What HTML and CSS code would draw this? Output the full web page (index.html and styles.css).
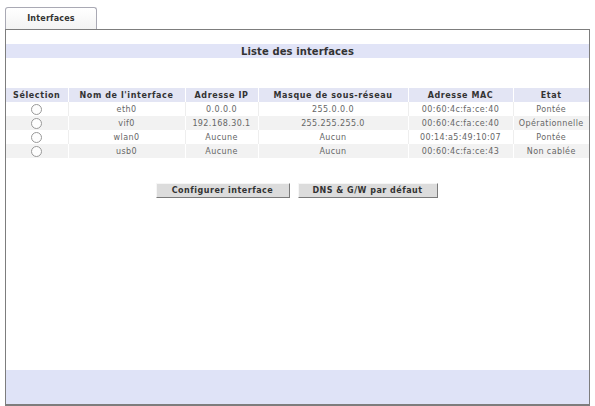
FILE: index.html
```html
<!DOCTYPE html>
<html lang="fr">
<head>
<meta charset="utf-8">
<title>Interfaces</title>
<link rel="stylesheet" href="styles.css">
</head>
<body>
<div class="page">
  <div class="tabs">
    <div class="tab">Interfaces</div>
  </div>
  <div class="panel">
    <div class="title">Liste des interfaces</div>
    <table class="grid">
      <colgroup>
        <col class="c1"><col class="c2"><col class="c3"><col class="c4"><col class="c5"><col class="c6">
      </colgroup>
      <thead>
        <tr><th>Sélection</th><th>Nom de l'interface</th><th>Adresse IP</th><th>Masque de sous-réseau</th><th>Adresse MAC</th><th>Etat</th></tr>
      </thead>
      <tbody>
        <tr><td><span class="radio"></span></td><td>eth0</td><td>0.0.0.0</td><td>255.0.0.0</td><td>00:60:4c:fa:ce:40</td><td>Pontée</td></tr>
        <tr class="alt"><td><span class="radio"></span></td><td>vif0</td><td>192.168.30.1</td><td>255.255.255.0</td><td>00:60:4c:fa:ce:40</td><td>Opérationnelle</td></tr>
        <tr><td><span class="radio"></span></td><td>wlan0</td><td>Aucune</td><td>Aucun</td><td>00:14:a5:49:10:07</td><td>Pontée</td></tr>
        <tr class="alt"><td><span class="radio"></span></td><td>usb0</td><td>Aucune</td><td>Aucun</td><td>00:60:4c:fa:ce:43</td><td>Non cablée</td></tr>
      </tbody>
    </table>
    <div class="actions">
      <button class="btn btn-config">Configurer interface</button>
      <button class="btn btn-dns">DNS &amp; G/W par défaut</button>
    </div>
    <div class="footer"></div>
  </div>
</div>
</body>
</html>
```

FILE: styles.css
```css
html, body {
  margin: 0;
  padding: 0;
  background: #ffffff;
}
body {
  font-family: "DejaVu Sans", Verdana, sans-serif;
  font-size: 8px;
  color: #555;
}
.page {
  padding: 7px 5px 0 5px;
}
.tabs {
  display: flex;
  height: 22px;
}
.tab {
  width: 90px;
  height: 21px;
  border: 1px solid #a9a9b4;
  border-bottom: none;
  border-radius: 3px 3px 0 0;
  background: linear-gradient(#ffffff, #f3f3f3);
  font-weight: bold;
  color: #333;
  font-size: 8px;
  letter-spacing: 0.2px;
  display: flex;
  align-items: center;
  justify-content: center;
}
.panel {
  height: 374px;
  border: 1px solid #7d7d7d;
  border-bottom-width: 2px;
  display: flex;
  flex-direction: column;
}
.title {
  margin-top: 14px;
  height: 14px;
  background: #e1e4f7;
  font-size: 10px;
  font-weight: bold;
  color: #333;
  letter-spacing: 0.1px;
  display: flex;
  align-items: center;
  justify-content: center;
}
.grid {
  margin-top: 30px;
  width: 100%;
  border-collapse: collapse;
  table-layout: fixed;
}
.c1 { width: 62px; }
.c2 { width: 117px; }
.c3 { width: 73px; }
.c4 { width: 150px; }
.c5 { width: 105px; }
.c6 { width: auto; }
.grid th {
  height: 14px;
  padding: 0;
  background: #e3e5f4;
  border-left: 1px solid #ffffff;
  font-weight: bold;
  color: #333;
  font-size: 8px;
  letter-spacing: 0.6px;
  text-align: center;
  white-space: nowrap;
}
.grid th:first-child { border-left: none; }
.grid td {
  height: 14px;
  padding: 0;
  text-align: center;
  font-size: 8px;
  letter-spacing: 0.4px;
  color: #666;
  border-left: 1px solid #eeeeee;
  white-space: nowrap;
}
.grid td:first-child { border-left: none; }
.grid tr.alt td {
  background: #f2f2f2;
  border-left-color: #ffffff;
}
.grid tr.alt td:first-child { border-left: none; }
.radio {
  display: inline-block;
  width: 11px;
  height: 11px;
  border: 1px solid #999;
  border-radius: 50%;
  background: #fdfdfd;
  vertical-align: middle;
  box-sizing: border-box;
}
.actions {
  margin-top: 25px;
  display: flex;
  justify-content: center;
  gap: 8px;
  padding-right: 2px;
}
.btn {
  height: 15px;
  padding: 0;
  font-family: "DejaVu Sans", Verdana, sans-serif;
  font-size: 8px;
  font-weight: bold;
  letter-spacing: 0.5px;
  color: #333;
  background: #dcdcdc;
  border: 1px solid;
  border-color: #f6f6f6 #7a7a7a #7a7a7a #f6f6f6;
}
.btn-config { width: 134px; }
.btn-dns { width: 140px; }
.footer {
  margin-top: auto;
  height: 34px;
  background: #dfe3f7;
}
```
